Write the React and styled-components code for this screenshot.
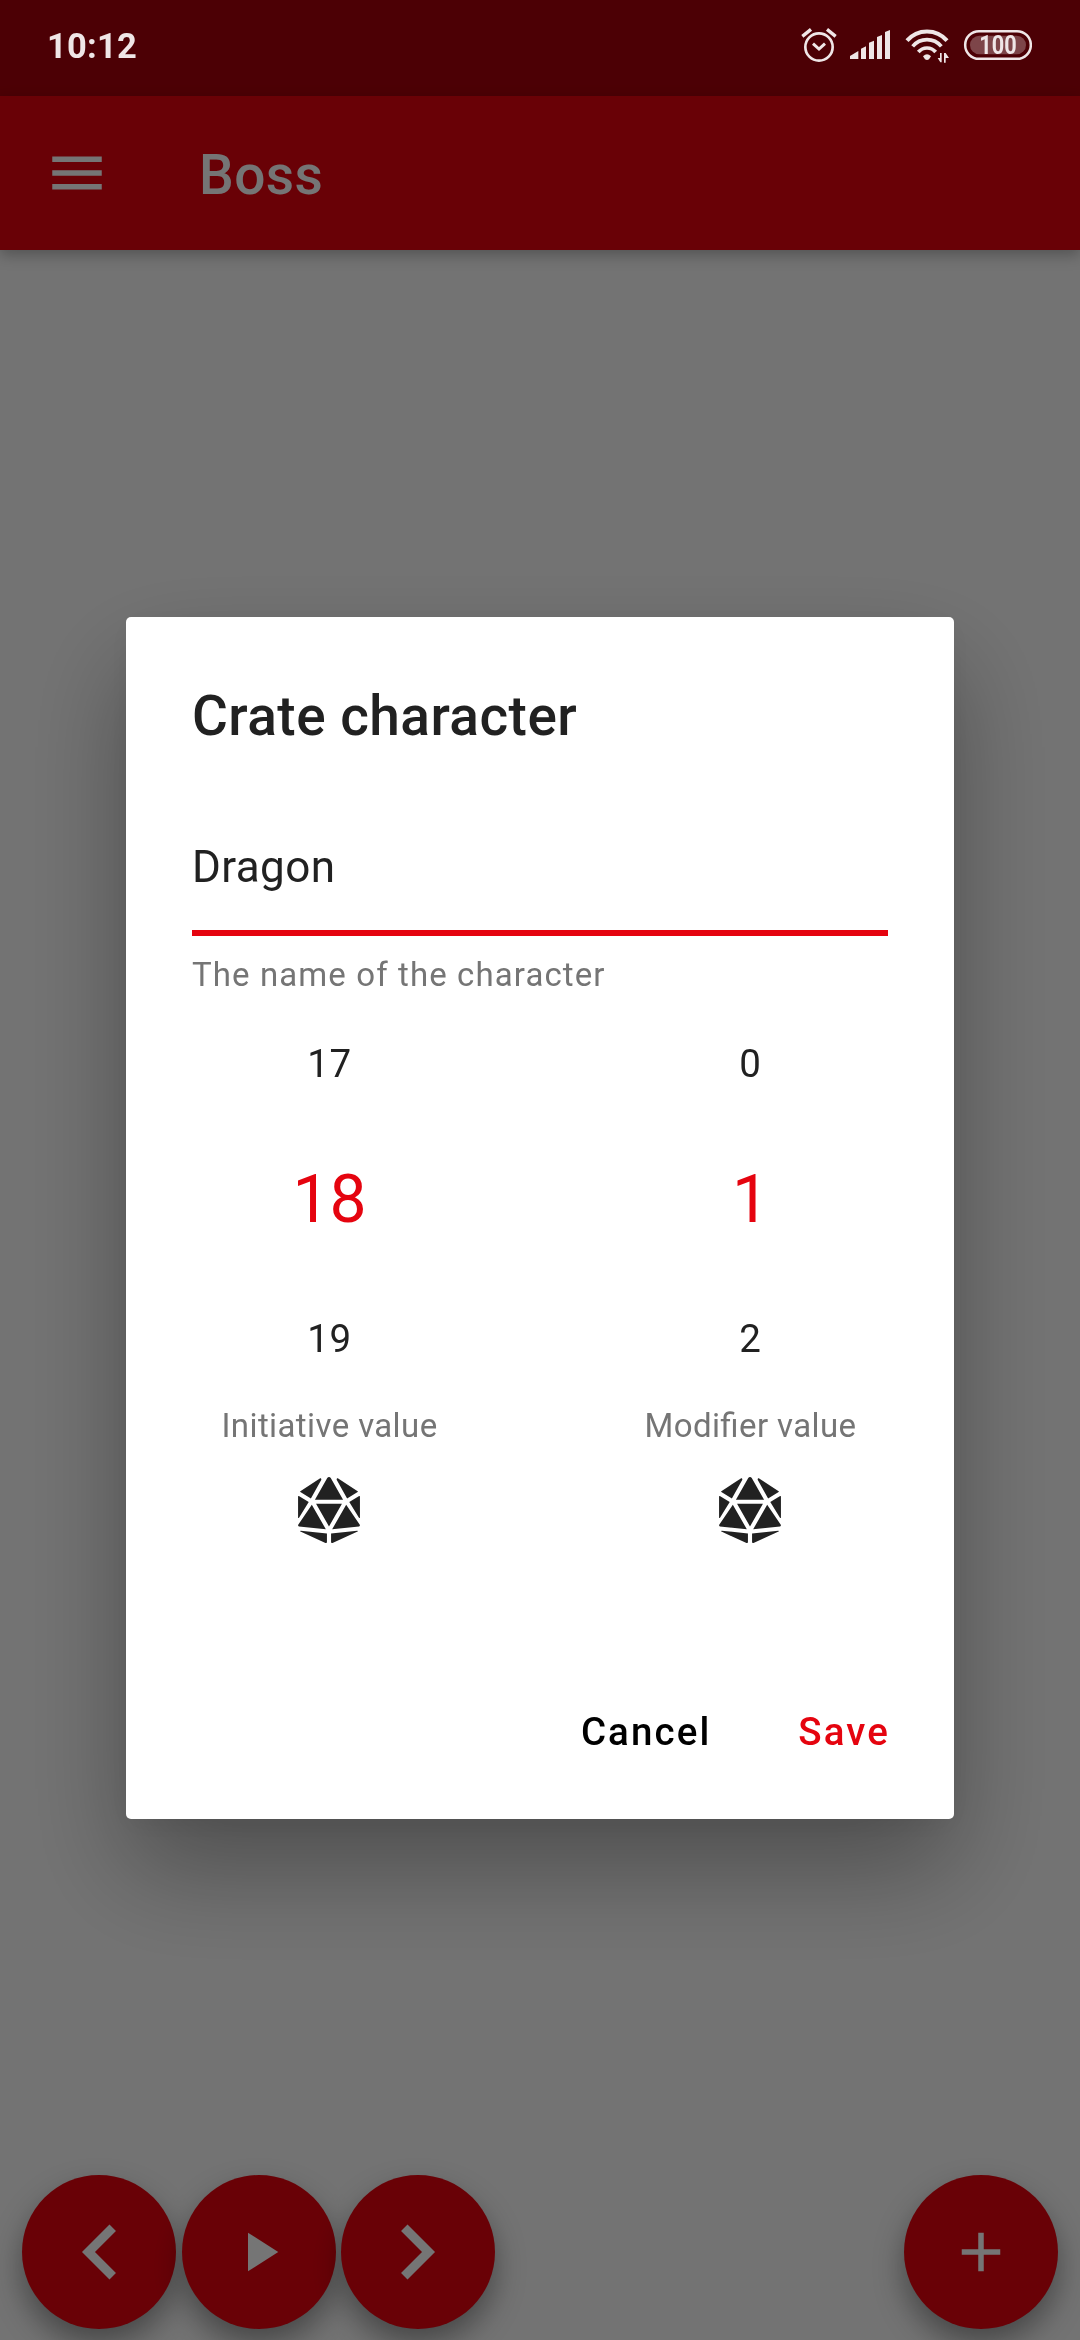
import React from "react";
import styled, { createGlobalStyle } from "styled-components";
import { FaDiceD20 } from "react-icons/fa";

const RED = "#e5040f";
const STATUS_INK = "#efe6e7";

const GlobalStyle = createGlobalStyle`
  * { box-sizing: border-box; }
  body { margin: 0; background: #fafafa; font-family: Roboto, "Noto Sans", sans-serif; }
`;

const Screen = styled.div`
  display: flex;
  flex-direction: column;
  width: 1080px;
  height: 2340px;
  overflow: hidden;
  background: #fafafa;
`;

const StatusSpace = styled.div`
  height: 96px;
  flex: none;
  background: #a6000b;
`;

const AppBar = styled.header`
  display: flex;
  align-items: center;
  flex: none;
  gap: 89px;
  height: 154px;
  padding: 0 44px;
  background: ${RED};
  box-shadow: 0 5px 14px rgba(0, 0, 0, 0.28);
`;

const Icon = styled.svg`
  display: block;
  width: ${(p) => p.$size || 66}px;
  height: ${(p) => p.$size || 66}px;
  fill: #fff;
`;

const BarTitle = styled.h1`
  margin: 4px 0 0;
  color: #fff;
  font-size: 55px;
  line-height: 64px;
  font-weight: 500;
  letter-spacing: 0.41px;
`;

const FabRow = styled.nav`
  display: flex;
  gap: 5.5px;
  margin-top: auto;
  padding: 0 22px 11px;
`;

const Fab = styled.button`
  display: flex;
  align-items: center;
  justify-content: center;
  width: 154px;
  height: 154px;
  padding: 0;
  margin-left: ${(p) => (p.$end ? "auto" : 0)};
  border: 0;
  border-radius: 50%;
  background: ${RED};
  box-shadow: 0 15px 30px rgba(0, 0, 0, 0.38);
`;

const Scrim = styled.div`
  position: fixed;
  inset: 0;
  display: flex;
  flex-direction: column;
  width: 1080px;
  height: 2340px;
  background: rgba(0, 0, 0, 0.54);
`;

const StatusBar = styled.div`
  display: flex;
  align-items: center;
  justify-content: space-between;
  flex: none;
  height: 96px;
  padding: 0 48px 0 47px;
`;

const Clock = styled.time`
  color: ${STATUS_INK};
  font-size: 34.5px;
  line-height: 40px;
  font-weight: 700;
  letter-spacing: 0.2px;
  margin-bottom: 5px;
`;

const StatusIcons = styled.svg`
  width: 232px;
  height: 96px;
  display: block;
`;

const DialogArea = styled.div`
  flex: 1;
  display: flex;
  align-items: center;
  justify-content: center;
`;

const Dialog = styled.section`
  display: flex;
  flex-direction: column;
  width: 828px;
  height: 1202px;
  padding: 67px 66px 64px;
  border-radius: 5px;
  background: #fff;
  color: #212121;
  box-shadow: 0 50px 105px rgba(0, 0, 0, 0.32), 0 6px 30px rgba(0, 0, 0, 0.06);
`;

const DialogTitle = styled.h2`
  margin: 0 0 93px;
  font-size: 55px;
  line-height: 64px;
  font-weight: 500;
  letter-spacing: 0.45px;
`;

const NameField = styled.div`
  height: 95px;
  border-bottom: 6px solid ${RED};
  font-size: 44px;
  line-height: 52px;
  letter-spacing: 0.41px;
`;

const Helper = styled.p`
  margin: ${(p) => p.$top || 0}px 0 0;
  color: #757575;
  font-size: 33px;
  line-height: 38px;
  letter-spacing: ${(p) => p.$spacing}px;
  font-feature-settings: "liga" 1;
  white-space: nowrap;
`;

const Pickers = styled.div`
  display: flex;
  justify-content: space-between;
`;

const Picker = styled.div`
  display: flex;
  flex-direction: column;
  align-items: center;
  width: 275px;
`;

const PickerValue = styled.div`
  height: 137.5px;
  line-height: ${(p) => (p.$active ? 136 : 139)}px;
  font-size: ${(p) => (p.$active ? 66 : 38.5)}px;
  letter-spacing: ${(p) => (p.$active ? 0 : 0.69)}px;
  color: ${(p) => (p.$active ? RED : "#212121")};
`;

const Dice = styled(FaDiceD20)`
  width: 62px;
  height: 66px;
  margin: 32px 1px 0 0;
  color: #212121;
`;

const Actions = styled.div`
  display: flex;
  justify-content: flex-end;
  gap: 87px;
  margin: auto -2px 0 0;
`;

const TextButton = styled.button`
  padding: 0;
  border: 0;
  background: none;
  color: ${(p) => (p.$primary ? RED : "#000")};
  font: 500 38.5px/46px Roboto, "Noto Sans", sans-serif;
  letter-spacing: 2.1px;
`;

function ValuePicker({ values, label, spacing }) {
  return (
    <Picker>
      {values.map((v, i) => (
        <PickerValue key={v} $active={i === 1}>{v}</PickerValue>
      ))}
      <Helper $spacing={spacing}>{label}</Helper>
      <Dice />
    </Picker>
  );
}

function SystemIcons() {
  return (
    <StatusIcons viewBox="60 0 696 288">
      <g fill="none" stroke={STATUS_INK} strokeWidth="8">
        <circle cx="117" cy="141" r="41" strokeWidth="8" />
        <path d="M67 109L93 88M167 109L141 88" strokeWidth="10" />
        <path d="M99 131L117 147L135 131" strokeWidth="9" />
        <path d="M381 122A79 79 0 0 1 501 122" strokeWidth="12" />
        <path d="M398 139A56 56 0 0 1 484 139" strokeWidth="11" />
        <path d="M415 156A34 34 0 0 1 467 156" strokeWidth="11" />
        <rect x="555.5" y="93.5" width="197" height="83" rx="41.5" strokeWidth="7.5" />
      </g>
      <g fill={STATUS_INK}>
        <path d="M210 177V168L235 153V177ZM243 177V146L258 139V177ZM267 177V128L282 122V177ZM291 177V111L306 105V177ZM315 177V96L330 90V177Z" />
        <path d="M429 169Q441 156 453 169L447 178Q441 182 435 178Z" />
        <path d="M480 159H485V187H481L473 174H480ZM492 188V159H497L507 174H497V188Z" />
      </g>
      <rect x="570" y="107" width="168" height="56" rx="28" fill={STATUS_INK} opacity="0.3" />
      <text
        x="598"
        y="163"
        fill={STATUS_INK}
        fontSize="75"
        fontWeight="700"
        fontFamily="Roboto, sans-serif"
        textLength="112"
        lengthAdjust="spacingAndGlyphs"
      >
        100
      </text>
    </StatusIcons>
  );
}

export default function App() {
  return (
    <>
      <GlobalStyle />
      <Screen>
        <StatusSpace />
        <AppBar>
          <Icon viewBox="0 0 24 24"><path d="M3 18h18v-2H3v2zm0-5h18v-2H3v2zm0-7v2h18V6H3z" /></Icon>
          <BarTitle>Boss</BarTitle>
        </AppBar>
        <FabRow>
          <Fab aria-label="Previous">
            <Icon $size={110} viewBox="0 0 24 24"><path d="M15.7 7.41L14.29 6l-6 6 6 6 1.41-1.41L11.12 12z" /></Icon>
          </Fab>
          <Fab aria-label="Play">
            <Icon viewBox="0 0 24 24"><path d="M8 5v14l11-7z" /></Icon>
          </Fab>
          <Fab aria-label="Next">
            <Icon $size={110} viewBox="0 0 24 24"><path d="M8.3 7.41L9.71 6l6 6-6 6-1.41-1.41L12.88 12z" /></Icon>
          </Fab>
          <Fab aria-label="Add" $end>
            <Icon viewBox="0 0 24 24"><path d="M19 13h-6v6h-2v-6H5v-2h6V5h2v6h6v2z" /></Icon>
          </Fab>
        </FabRow>
      </Screen>
      <Scrim>
        <StatusBar>
          <Clock>10:12</Clock>
          <SystemIcons />
        </StatusBar>
        <DialogArea>
          <Dialog role="dialog">
            <DialogTitle>Crate character</DialogTitle>
            <NameField>Dragon</NameField>
            <Helper $top={20} $spacing={1.1}>The name of the character</Helper>
            <Pickers>
              <ValuePicker values={[17, 18, 19]} label="Initiative value" spacing={0.4} />
              <ValuePicker values={[0, 1, 2]} label="Modifier value" spacing={0.4} />
            </Pickers>
            <Actions>
              <TextButton>Cancel</TextButton>
              <TextButton $primary>Save</TextButton>
            </Actions>
          </Dialog>
        </DialogArea>
      </Scrim>
    </>
  );
}
